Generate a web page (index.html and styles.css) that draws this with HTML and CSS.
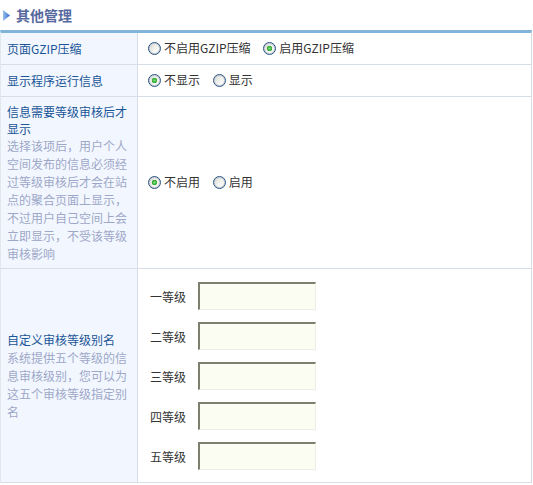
FILE: index.html
```html
<!DOCTYPE html>
<html>
	<head>
		<meta charset="UTF-8" />
		<title>其他管理</title>
		<link rel="stylesheet" href="styles.css">
	</head>
	<body>
		<div class="title">
			<svg class="arrow" width="7" height="11" viewBox="0 0 7 11">
				<defs>
					<linearGradient id="arrowFill" x1="0" y1="0" x2="1" y2="0">
						<stop offset="0" stop-color="#9cc0ee" />
						<stop offset="1" stop-color="#2f6cc8" />
					</linearGradient>
				</defs>
				<polygon points="0,0 7,5.5 0,11" fill="url(#arrowFill)" />
			</svg>
			<h2>其他管理</h2>
		</div>
		<table class="settings">
			<tr class="row-small">
				<td class="label">
					<div class="name">页面GZIP压缩</div>
				</td>
				<td class="field">
					<label class="choice"><input type="radio" name="gzip"> 不启用GZIP压缩</label>
					<label class="choice"><input type="radio" name="gzip" checked> 启用GZIP压缩</label>
				</td>
			</tr>
			<tr class="row-small">
				<td class="label">
					<div class="name">显示程序运行信息</div>
				</td>
				<td class="field">
					<label class="choice"><input type="radio" name="debug" checked> 不显示</label>
					<label class="choice"><input type="radio" name="debug"> 显示</label>
				</td>
			</tr>
			<tr class="row-audit">
				<td class="label">
					<div class="name">信息需要等级审核后才显示</div>
					<div class="desc">选择该项后，用户个人空间发布的信息必须经过等级审核后才会在站点的聚合页面上显示，不过用户自己空间上会立即显示，不受该等级审核影响</div>
				</td>
				<td class="field">
					<label class="choice"><input type="radio" name="audit" checked> 不启用</label>
					<label class="choice"><input type="radio" name="audit"> 启用</label>
				</td>
			</tr>
			<tr>
				<td class="label">
					<div class="name">自定义审核等级别名</div>
					<div class="desc">系统提供五个等级的信息审核级别，您可以为这五个审核等级指定别名</div>
				</td>
				<td class="field">
					<div class="levels">
						<span>一等级</span><input type="text" class="text">
						<span>二等级</span><input type="text" class="text">
						<span>三等级</span><input type="text" class="text">
						<span>四等级</span><input type="text" class="text">
						<span>五等级</span><input type="text" class="text">
					</div>
				</td>
			</tr>
		</table>
	</body>
</html>
```

FILE: styles.css
```css
* {
	margin: 0;
	padding: 0;
	box-sizing: border-box;
}
body {
	font-family: "Noto Sans CJK SC", "Liberation Sans", sans-serif;
	font-size: 12px;
	color: #333;
	background-color: #fff;
}
.title {
	height: 30px;
	display: flex;
	align-items: center;
	padding-left: 3px;
}
.title .arrow {
	display: block;
	margin-right: 6px;
}
.title h2 {
	font-size: 14px;
	font-weight: bold;
	color: #56699f;
	line-height: 16px;
}
.settings {
	width: 532px;
	table-layout: fixed;
	border-collapse: separate;
	border-spacing: 0;
	border-top: 3px solid #80b5d9;
	border-left: 1px solid #e2e7ee;
	border-right: 1px solid #d5dce6;
}
.settings td {
	border-bottom: 1px solid #d7dee8;
	vertical-align: middle;
}
.settings td.label {
	width: 137px;
	padding: 0 6px;
	background-color: #f2f7ff;
	border-right: 1px solid #d7dee8;
	line-height: 18px;
}
.settings td.field {
	padding: 0 10px;
}
.row-small td {
	height: 32px;
}
.row-audit td {
	height: 172px;
}
.name {
	color: #1a5597;
}
.row-audit .name {
	line-height: 17px;
}
.desc {
	color: #9ea7c8;
}
.choice {
	display: inline-flex;
	align-items: center;
	margin-right: 10px;
	line-height: 18px;
}
.choice input {
	appearance: none;
	-webkit-appearance: none;
	width: 13px;
	height: 13px;
	margin-right: 3px;
	border: 1px solid #2a5584;
	border-radius: 50%;
	background: linear-gradient(135deg, #d8d8d2 0%, #f4f4f0 55%, #ffffff 100%);
	box-shadow: inset 0 0 0 1px #c8ccd4;
}
.choice input:checked {
	background: radial-gradient(circle, #7ee07e 0, #2ea52e 2.5px, transparent 3px), linear-gradient(135deg, #d8d8d2 0%, #f4f4f0 55%, #ffffff 100%);
}
.levels {
	display: grid;
	grid-template-columns: 36px 118px;
	column-gap: 12px;
	row-gap: 12px;
	align-items: center;
	padding: 13px 0 12px 2px;
}
.text {
	width: 118px;
	height: 28px;
	border-style: solid;
	border-width: 2px 1px 1px 2px;
	border-color: #7f7f70 #efefe6 #efefe6 #7f7f70;
	background-color: #fcfdf2;
	outline: none;
}
```
